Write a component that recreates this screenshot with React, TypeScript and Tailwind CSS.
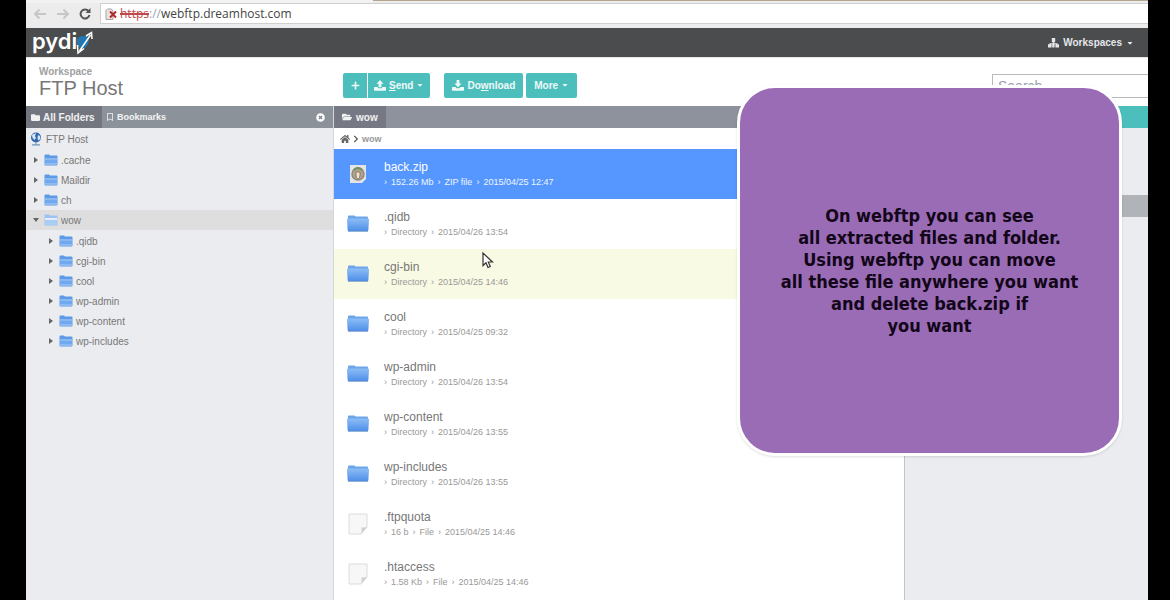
import { useState } from "react";
import { FaFolder, FaFolderOpen, FaHome, FaChevronRight, FaRegBookmark, FaCaretDown, FaPlus } from "react-icons/fa";

type FileRow = { name: string; meta: string[]; kind: "zip" | "dir" | "file" };

const topFolders = [".cache", "Maildir", "ch"];
const subFolders = [".qidb", "cgi-bin", "cool", "wp-admin", "wp-content", "wp-includes"];

const files: FileRow[] = [
  { name: "back.zip", meta: ["152.26 Mb", "ZIP file", "2015/04/25 12:47"], kind: "zip" },
  { name: ".qidb", meta: ["Directory", "2015/04/26 13:54"], kind: "dir" },
  { name: "cgi-bin", meta: ["Directory", "2015/04/25 14:46"], kind: "dir" },
  { name: "cool", meta: ["Directory", "2015/04/25 09:32"], kind: "dir" },
  { name: "wp-admin", meta: ["Directory", "2015/04/26 13:54"], kind: "dir" },
  { name: "wp-content", meta: ["Directory", "2015/04/26 13:55"], kind: "dir" },
  { name: "wp-includes", meta: ["Directory", "2015/04/26 13:55"], kind: "dir" },
  { name: ".ftpquota", meta: ["16 b", "File", "2015/04/25 14:46"], kind: "file" },
  { name: ".htaccess", meta: ["1.58 Kb", "File", "2015/04/25 14:46"], kind: "file" },
];

function Arrow({ back }: { back?: boolean }) {
  return (
    <svg viewBox="0 0 14 12" className={`h-3 w-[14px] ${back ? "rotate-180" : ""}`} fill="none" stroke="#c6c6c6" strokeWidth="2">
      <path d="M1 6h11M7.5 1.5 12 6l-4.500 4.500" />
    </svg>
  );
}

function TrayIcon({ up }: { up?: boolean }) {
  return (
    <svg viewBox="0 0 12 11" className="h-[11px] w-3" fill="currentColor">
      {up ? <path d="M6 0 9.500 3.700H7.400V7.200H4.600V3.700H2.500z" /> : <path d="M4.600 0H7.400V3.500H9.500L6 7.200 2.500 3.500H4.600z" />}
      <path d="M.5 7h3l1 1.300h3l1-1.300h3Q12 7 12 7.600V10q0 .7-.7.7H.7Q0 10.700 0 10V7.600Q0 7 .5 7z" />
    </svg>
  );
}

function SitemapIcon() {
  return (
    <svg viewBox="0 0 11 10" className="h-[10px] w-[11px]" fill="currentColor">
      <path d="M3.800 0h3.400v4H6.300v1.300h3.200V6.200H11V9.500H7.400V6.200H6.600v3.300H4.200V6.200h-.6v3.300H0V6.200H1.500V5.300H4.700V4H3.800z" />
    </svg>
  );
}

function TreeFolder({ open }: { open?: boolean }) {
  return (
    <svg viewBox="0 0 14 12" className="h-3 w-[14px] shrink-0">
      <path d="M.5 1.500q0-1 1-1H5l1 1h6.500q1 0 1 1V10.500q0 1-1 1h-11q-1 0-1-1z" fill={open ? "#9cc3f2" : "#5c9ae8"} />
      <path d="M1 4h12v2H1z" fill={open ? "#e4effb" : "#8ab8f1"} />
      <path d="M1 6h12v3.500H1z" fill={open ? "#a9ccf5" : "#72a8ee"} />
      <path d="M1 9.500h12v1H1z" fill="#b8d5f7" />
    </svg>
  );
}

function DirIcon() {
  return (
    <svg viewBox="0 0 24 20" className="h-5 w-6">
      <defs>
        <linearGradient id="dir" x1="0" y1="0" x2="0" y2="1">
          <stop offset="0" stopColor="#8dbdf6" />
          <stop offset="1" stopColor="#4e8fe8" />
        </linearGradient>
      </defs>
      <path d="M2 2.500Q2 1.500 3 1.500h5q1 0 1.500 1H21q1 0 1 1V8H2z" fill="#6ba5ea" />
      <path d="M1 5.500q0-1 1-1h20q1 0 1 1l-.6 10.500q0 1-1 1H2.600q-1 0-1-1z" fill="url(#dir)" />
      <path d="M2 17.300h20" stroke="#5b87c2" strokeWidth=".8" />
    </svg>
  );
}

function PageIcon() {
  return (
    <svg viewBox="0 0 20 22" className="h-[22px] w-5">
      <path d="M1 1h18v13l-6 7H1z" fill="#f7f7f7" stroke="#dcdcdc" />
      <path d="M19 14q-3 .5-5.500.500.500 3-.5 6.500z" fill="#cfcfcf" />
    </svg>
  );
}

function ZipIcon() {
  return (
    <svg viewBox="0 0 18 20" className="h-5 w-[18px]">
      <path d="M1 1h16v14l-4 4H1z" fill="#e4e4e4" />
      <circle cx="9" cy="10" r="6" fill="#b5a48d" stroke="#8d8781" strokeWidth="1.500" />
      <path d="M5 6q4-4 8 0" fill="none" stroke="#6f9160" strokeWidth="2" />
      <path d="M7 8h4v3q0 4-2 4t-2-4z" fill="#efe3cf" stroke="#776a5f" strokeWidth=".8" />
    </svg>
  );
}

function Globe() {
  return (
    <svg viewBox="0 0 12 14" className="h-[14px] w-3">
      <circle cx="6" cy="5.500" r="5" fill="#3166b1" />
      <path d="M2 3q2-2 4-1.500L5 4l1 2-1.500 2L2.500 6zM8 3l2 1 .5 3L8 8.500 7.500 6z" fill="#d5e6f6" />
      <path d="M6 10.500v2M2 12.800h8" stroke="#7296bd" strokeWidth="1.200" />
    </svg>
  );
}

function Logo() {
  return (
    <a href="#" aria-label="Pydio" className="flex items-center font-[Inter,sans-serif] text-[22px] leading-6 font-semibold text-white">
      <span className="pb-[3px]">pydi</span>
      <svg viewBox="0 0 18 24" className="-ml-px h-6 w-[18px]" fill="none">
        <path d="M1 7.500Q6 4 12 5.500L13 9q-1 6-5 9-6-1-7-5z" fill="#2278b4" />
        <path d="M14.500 4 3.500 20M10 5l5.500-3.500L16 8M1.500 14l.5 8 6-4.500" stroke="#fff" strokeWidth="1.500" />
      </svg>
    </a>
  );
}

function TreeItem({ name, nested, open }: { name: string; nested?: boolean; open?: boolean }) {
  return (
    <button
      className={`flex h-5 w-full items-center text-left text-[10px] text-[#777] ${nested ? "pl-[22px]" : "pl-[7px]"} ${open ? "bg-[#dedede]" : ""}`}
    >
      <svg viewBox="0 0 6 6" className={`mr-[5px] h-[6px] w-[6px] ${open ? "rotate-90" : ""}`}>
        <path d="M1 0 5 3 1 6z" fill="#666" />
      </svg>
      <TreeFolder open={open} />
      <span className="ml-[3px]">{name}</span>
    </button>
  );
}

const teal = "flex h-[25px] items-center bg-[#4cbfbc] text-[10px] font-bold text-white/90";

export default function App() {
  const [selected, setSelected] = useState("back.zip");

  return (
    <div className="relative flex h-screen flex-col overflow-hidden border-l-[26px] border-r-[22px] border-black bg-white font-['Liberation_Sans',Arial,sans-serif]">
      {/* Browser bar */}
      <div className="flex h-7 shrink-0 flex-col bg-[#ececec]">
        <div className="flex h-[3px]">
          <div className="w-[347px] bg-[#f2f2f2]" />
          <div className="h-px flex-1 bg-[#b5a48f]" />
        </div>
        <div className="flex flex-1 items-start">
          <div className="flex h-[21px] w-[74px] items-center gap-[9px] pl-[7px]">
            <button aria-label="Back"><Arrow back /></button>
            <button aria-label="Forward"><Arrow /></button>
            <button aria-label="Reload">
              <svg viewBox="0 0 12 12" className="h-3 w-3" fill="none" stroke="#555" strokeWidth="2">
                <path d="M9.500 3A4.500 4.500 0 1 0 10.500 7" />
                <path d="M11.500 0v5h-5z" fill="#555" stroke="none" />
              </svg>
            </button>
          </div>
          <label className="flex h-[21px] flex-1 items-center border border-r-0 border-[#cfcfcf] bg-white pl-1 font-['Open_Sans',sans-serif] text-[12px]">
            <svg viewBox="0 0 13 12" className="mr-[2px] h-3 w-[13px]">
              <path d="M1 2.500 2.500 1h4L8 3v8.500H1z" fill="#e8e4e2" stroke="#a9a3a1" />
              <path d="m5 3.500 6 6m0-6-6 6" stroke="#b3262b" strokeWidth="2" />
            </svg>
            <span className="text-[#c0494b] line-through decoration-2">https</span>
            <span className="text-gray-400">://</span>
            <input aria-label="Address" defaultValue="webftp.dreamhost.com" className="min-w-0 flex-1 text-[#444] outline-none" />
          </label>
        </div>
      </div>

      {/* Header */}
      <header className="flex h-[29px] shrink-0 items-center justify-between bg-[#4a4c4d] pl-[6px] pr-[14px]">
        <Logo />
        <button className="flex items-center gap-1 text-[10px] font-bold text-gray-200">
          <SitemapIcon />
          Workspaces
          <FaCaretDown className="h-2 w-2" />
        </button>
      </header>

      <div className="flex h-[49px] shrink-0 items-center border-t border-gray-200">
        <div className="w-[308px] pl-[13px]">
          <div className="text-[10px] leading-3 font-bold text-[#a0a0a0]">Workspace</div>
          <h1 className="text-[20px] leading-5 text-[#777]">FTP Host</h1>
        </div>
        <div className="flex flex-1 items-center pt-[6px] pl-[9px]">
          <button aria-label="Add" className={`${teal} w-6 justify-center rounded-l-xs`}>
            <FaPlus className="h-[9px] w-[9px]" />
          </button>
          <button className={`${teal} ml-px gap-[3px] rounded-r-xs px-[6px]`}>
            <TrayIcon up />
            <span><u>S</u>end</span>
            <FaCaretDown className="h-2 w-2" />
          </button>
          <button className={`${teal} ml-[14px] gap-[3px] rounded-xs px-2`}>
            <TrayIcon />
            <span>Do<u>w</u>nload</span>
          </button>
          <button className={`${teal} ml-[3px] gap-[3px] rounded-xs px-2`}>
            <span>More</span>
            <FaCaretDown className="h-2 w-2" />
          </button>
        </div>
        <input
          type="text"
          aria-label="Search"
          placeholder="Search"
          className="mt-2 h-6 w-[156px] border border-r-0 border-[#b9b9b9] pl-[5px] text-[14px] placeholder:text-gray-400"
        />
      </div>

      <div className="flex min-h-0 flex-1">
        {/* Folder tree */}
        <aside className="flex w-[308px] shrink-0 flex-col border-r border-[#d5d7db] bg-[#ebecef]">
          <div className="flex h-[22px] items-center bg-[#8c929a] text-white/90">
            <button className="flex h-full w-[76px] items-center gap-[3px] bg-[#73767f] pl-[5px] text-[10px] font-bold whitespace-nowrap">
              <FaFolder className="h-[9px] w-[9px]" />
              All Folders
            </button>
            <button className="flex h-full flex-1 items-center gap-[3px] pl-1 text-[9px] leading-3 font-bold">
              <FaRegBookmark className="h-2 w-2" />
              Bookmarks
            </button>
            <button aria-label="Close" className="mr-2">
              <svg viewBox="0 0 9 9" className="h-[9px] w-[9px]">
                <circle cx="4.500" cy="4.500" r="4.300" fill="#fff" />
                <path d="m3 3 3 3m0-3L3 6" stroke="#7d828a" strokeWidth="1.300" />
              </svg>
            </button>
          </div>
          <nav>
            <button className="flex h-[22px] w-full items-center gap-[4px] pl-[4px] text-left text-[10px] text-[#777]">
              <Globe />
              FTP Host
            </button>
            {topFolders.map((f) => (
              <TreeItem key={f} name={f} />
            ))}
            <TreeItem name="wow" open />
            <div className="pt-px">
              {subFolders.map((f) => (
                <TreeItem key={f} name={f} nested />
              ))}
            </div>
          </nav>
        </aside>

        {/* File list */}
        <main className="flex min-w-0 flex-1 flex-col">
          <div className="flex h-[22px] shrink-0 bg-[#8e929c]">
            <button className="flex items-center gap-1 bg-[#767983] pr-2 pl-2 text-[10px] font-bold text-white/90">
              <FaFolderOpen className="h-[10px] w-[10px]" />
              wow
            </button>
          </div>
          <div className="flex h-[21px] shrink-0 items-center gap-[2px] pl-[6px] text-[9px] leading-3 font-bold text-[#999]">
            <FaHome className="h-[10px] w-[10px] text-[#666]" />
            <FaChevronRight className="h-[8px] w-[8px] text-[#555]" />
            wow
          </div>
          <ul>
            {files.map((f) => {
              const active = f.name === selected;
              return (
                <li key={f.name}>
                  <button
                    onClick={() => setSelected(f.name)}
                    className={`flex h-[50px] w-full items-center text-left ${
                      active ? "bg-[#5596ff] text-white" : f.name === "cgi-bin" ? "bg-[#f9fae3] text-[#777]" : "text-[#777]"
                    }`}
                  >
                    <span className="flex w-[50px] justify-center pr-[2px]">
                      {f.kind === "dir" ? <DirIcon /> : f.kind === "zip" ? <ZipIcon /> : <PageIcon />}
                    </span>
                    <span className="flex flex-col gap-px">
                      <span className="text-[12px] leading-[14px]">{f.name}</span>
                      <span className={`flex gap-1 text-[9px] leading-[14px] ${active ? "text-white/90" : "text-[#999]"}`}>
                        {f.meta.map((m) => (
                          <span key={m} className="flex gap-1">
                            <span>›</span>
                            {m}
                          </span>
                        ))}
                      </span>
                    </span>
                  </button>
                </li>
              );
            })}
          </ul>
        </main>

        {/* Info panel */}
        <aside className="w-[244px] shrink-0 border-l border-[#c3c4c7] bg-[#ebecef]">
          <div className="h-[22px] bg-[#4cbfbc]" />
          <div className="mt-[67px] h-[22px] bg-[#b0b4b9]" />
        </aside>
      </div>

      <svg viewBox="0 0 12 17" className="absolute top-[252px] left-[456px] h-[17px] w-3">
        <path d="M1 1v12.500l3-2.800 2 4.800 2.300-1-2-4.500H10.500z" fill="#fff" stroke="#333" strokeWidth="1.200" />
      </svg>

      <div className="absolute top-[85px] right-[26px] flex h-[371px] w-[385px] items-center justify-center rounded-[38px] border-[3px] border-white bg-[#9a6cb6] text-center font-['DejaVu_Sans_Condensed','DejaVu_Sans',sans-serif] text-[18px] leading-[22px] font-bold text-[#120618] shadow">
        <p>
          On webftp you can see<br />
          all extracted files and folder.<br />
          Using webftp you can move<br />
          all these file anywhere you want<br />
          and delete back.zip if<br />
          you want
        </p>
      </div>
    </div>
  );
}
